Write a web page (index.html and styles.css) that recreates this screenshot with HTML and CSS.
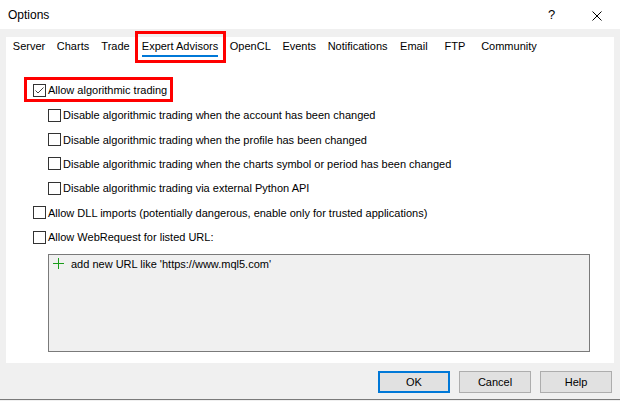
FILE: index.html
```html
<!DOCTYPE html>
<html lang="en">
<head>
    <meta charset="UTF-8">
    <title>Options</title>
    <link rel="stylesheet" href="styles.css">
</head>
<body>
    <div class="window">
        <div class="titlebar">
            <span class="title">Options</span>
            <span class="help-btn">?</span>
            <span class="close-btn">
                <svg width="10" height="10" viewBox="0 0 10 10"><path d="M0.5 0.5L9.5 9.5M9.5 0.5L0.5 9.5" stroke="#000" stroke-width="1" fill="none"/></svg>
            </span>
        </div>
        <div class="client">
            <div class="panel">
                <div class="tabs">
                    <div class="tab"><span>Server</span></div>
                    <div class="tab"><span>Charts</span></div>
                    <div class="tab"><span>Trade</span></div>
                    <div class="tab active marked"><span>Expert Advisors</span></div>
                    <div class="tab"><span>OpenCL</span></div>
                    <div class="tab"><span>Events</span></div>
                    <div class="tab"><span>Notifications</span></div>
                    <div class="tab"><span>Email</span></div>
                    <div class="tab"><span>FTP</span></div>
                    <div class="tab"><span>Community</span></div>
                </div>
                <div class="page">
                    <div class="row main marked">
                        <span class="box">
                            <svg width="11" height="11" viewBox="0 0 11 11"><path d="M1.5 5.5L4 8L9.5 2.5" stroke="#444" stroke-width="1" fill="none"/></svg>
                        </span>
                        Allow algorithmic trading
                    </div>
                    <div class="sub">
                        <div class="row"><span class="box"></span>Disable algorithmic trading when the account has been changed</div>
                        <div class="row"><span class="box"></span>Disable algorithmic trading when the profile has been changed</div>
                        <div class="row"><span class="box"></span>Disable algorithmic trading when the charts symbol or period has been changed</div>
                        <div class="row"><span class="box"></span>Disable algorithmic trading via external Python API</div>
                    </div>
                    <div class="row"><span class="box"></span>Allow DLL imports (potentially dangerous, enable only for trusted applications)</div>
                    <div class="row"><span class="box"></span>Allow WebRequest for listed URL:</div>
                    <div class="urls">
                        <div class="url-add">
                            <svg width="11" height="11" viewBox="0 0 11 11"><path d="M5.5 0V11M0 5.5H11" stroke="#1a9c1a" stroke-width="1" fill="none"/></svg>
                            add new URL like 'https://www.mql5.com'
                        </div>
                    </div>
                </div>
            </div>
            <div class="buttons">
                <button class="default">OK</button>
                <button>Cancel</button>
                <button>Help</button>
            </div>
        </div>
    </div>
</body>
</html>
```

FILE: styles.css
```css
body {
    margin: 0;
    background-color: #f0f0f0;
    font-family: "Liberation Sans", Arial, sans-serif;
    font-size: 11px;
    color: #000;
}
.window {
    width: 620px;
    height: 400px;
    box-sizing: border-box;
    border-bottom: 1px solid #7a7a7a;
    display: flex;
    flex-direction: column;
}
.titlebar {
    height: 29px;
    background-color: #fff;
    display: flex;
    align-items: center;
    font-size: 12px;
}
.title {
    padding-left: 8px;
    flex: 1;
}
.help-btn {
    font-size: 13px;
    width: 44px;
}
.close-btn {
    width: 28px;
    height: 10px;
}
.client {
    flex: 1;
    padding: 8px 6px 0 6px;
}
.panel {
    height: 326px;
    background-color: #fff;
}
.tabs {
    display: flex;
    padding-left: 1px;
}
.tab {
    position: relative;
    min-width: 41px;
    box-sizing: border-box;
    padding: 2px 5.8px 0 5.8px;
    text-align: center;
}
.tab span {
    display: inline-block;
    line-height: 14px;
    padding-bottom: 2px;
    border-bottom: 2px solid transparent;
}
.tab.active span {
    border-bottom-color: #0078d7;
}
.marked::after {
    content: "";
    position: absolute;
    border: 3px solid #ff0000;
}
.tab.marked::after {
    top: -6px;
    left: -1px;
    right: -2px;
    bottom: -6px;
}
.page {
    padding: 23px 0 0 27px;
}
.row {
    display: flex;
    align-items: center;
    height: 24.4px;
    white-space: nowrap;
}
.row.main {
    position: relative;
    display: inline-flex;
    height: 20px;
    padding-right: 3px;
}
.row.main::after {
    top: -3px;
    left: -9px;
    right: -3px;
    bottom: -2px;
}
.sub {
    padding-left: 15px;
    margin-top: 3px;
}
.box {
    width: 13px;
    height: 13px;
    box-sizing: border-box;
    border: 1px solid #333;
    background-color: #fff;
    margin-right: 2px;
    display: flex;
    align-items: center;
    justify-content: center;
}
.urls {
    margin: 4.6px 0 0 15px;
    width: 542px;
    height: 98px;
    box-sizing: border-box;
    border: 1px solid #7a7a7a;
    background-color: #f0f0f0;
    padding: 2px 4px;
}
.url-add {
    display: flex;
    align-items: center;
    height: 14px;
}
.url-add svg {
    margin-right: 7px;
}
.buttons {
    display: flex;
    justify-content: flex-end;
    gap: 9px;
    padding: 8px 2px 0 0;
}
.buttons button {
    width: 72px;
    height: 22px;
    font-family: inherit;
    font-size: 11px;
    background-color: #e1e1e1;
    border: 1px solid #adadad;
    padding: 0;
}
.buttons button.default {
    border: 2px solid #0078d7;
}
```
